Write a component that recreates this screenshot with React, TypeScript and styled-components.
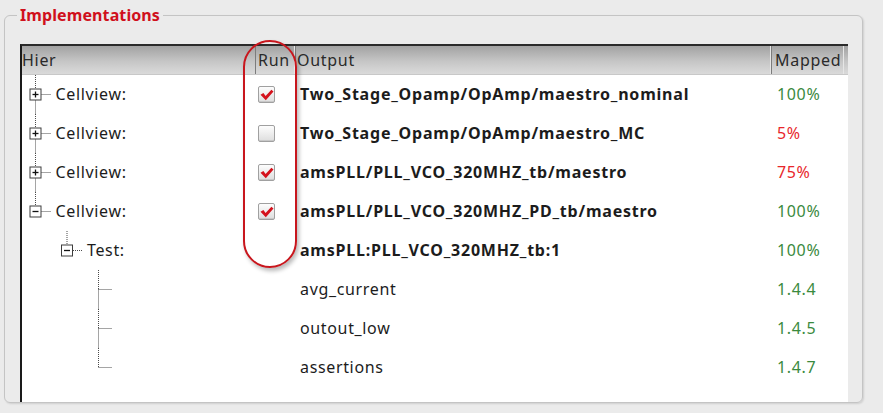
import React from "react";
import styled, { createGlobalStyle } from "styled-components";

const Global = createGlobalStyle`
  html, body { margin: 0; padding: 0; background: #ebebeb; }
  body { font-family: "Noto Sans", "Open Sans", sans-serif; }
`;

const Page = styled.div`
  position: relative;
  width: 883px;
  height: 413px;
  padding: 15px 0 0 4px;
  box-sizing: border-box;
  background: #ebebeb;
`;

const GroupBox = styled.div`
  position: relative;
  width: 859px;
  height: 388px;
  box-sizing: border-box;
  border: 1px solid #c4c4c4;
  border-radius: 6px;
  padding: 28px 15px 0 15px;
  box-shadow: 1px 1px 2px rgba(0, 0, 0, 0.12);
`;

const Legend = styled.div`
  position: absolute;
  left: 12px;
  top: -11px;
  padding: 0 3px;
  background: #ebebeb;
  color: #d0101c;
  font-weight: 700;
  font-size: 16px;
  line-height: 20px;
  letter-spacing: 0.1px;
`;

const Table = styled.div`
  width: 828px;
  height: 358px;
  box-sizing: border-box;
  background: #fff;
  border-left: 2px solid #1a1a1a;
  border-top: 2px solid #2a2a2a;
  display: flex;
  flex-direction: column;
`;

const Grid = styled.div`
  display: grid;
  grid-template-columns: 233px 40px 476px 73px;
`;

const Header = styled(Grid)`
  height: 28px;
  background: linear-gradient(#a2a2a2, #c6c6c6 55%, #dadada);
  border-bottom: 1px solid #c8c8c8;
  color: #2a2a2a;
  font-size: 16px;
  letter-spacing: 0.7px;
`;

const HeadCell = styled.div<{ $pad: number; $sep?: boolean }>`
  display: flex;
  align-items: center;
  padding-left: ${(p) => p.$pad}px;
  border-left: ${(p) => (p.$sep ? "1px solid #7c7c7c" : "none")};
  border-right: ${(p) => (p.$sep ? "1px solid #e6e6e6" : "none")};
  overflow: hidden;
  white-space: nowrap;
`;

const Row = styled(Grid)`
  height: 39px;
  align-items: center;
  font-size: 16px;
  letter-spacing: 0.65px;
  color: #1c1c1c;
`;

const HierCell = styled.div`
  display: flex;
  align-items: center;
  height: 39px;
`;

const TreeSvg = styled.svg`
  flex: none;
  display: block;
`;

const HierLabel = styled.span`
  white-space: nowrap;
  padding-bottom: 2px;
`;

const RunCell = styled.div`
  display: flex;
  align-items: center;
  padding-left: 3px;
`;

const Box = styled.span`
  display: inline-flex;
  align-items: center;
  justify-content: center;
  width: 17px;
  height: 17px;
  box-sizing: border-box;
  border: 1px solid #a0a0a0;
  border-radius: 2px;
  background: linear-gradient(#fdfdfd, #dedede);
  box-shadow: inset 0 -1px 0 #c8c8c8;
`;

const OutputCell = styled.div<{ $bold: boolean }>`
  padding-left: 5px;
  padding-bottom: 2px;
  font-weight: ${(p) => (p.$bold ? 700 : 400)};
  letter-spacing: ${(p) => (p.$bold ? "0.78px" : "0.65px")};
  white-space: nowrap;
`;

const MappedCell = styled.div<{ $bad: boolean }>`
  padding-left: 6px;
  padding-bottom: 2px;
  color: ${(p) => (p.$bad ? "#e8262b" : "#3a8a3e")};
  white-space: nowrap;
`;

const Highlight = styled.div`
  position: absolute;
  left: 243px;
  top: 40px;
  width: 54px;
  height: 228px;
  box-sizing: border-box;
  border: 2.5px solid #c8161d;
  border-radius: 27px;
  box-shadow: 2px 3px 4px rgba(0, 0, 0, 0.28);
  pointer-events: none;
`;

type Node = {
  level: number;
  box?: "plus" | "minus";
  above: boolean;
  below: boolean;
  label: string;
  run?: boolean;
  output: string;
  bold: boolean;
  mapped: string;
  bad: boolean;
};

const rows: Node[] = [
  { level: 0, box: "plus", above: true, below: true, label: "Cellview:", run: true, output: "Two_Stage_Opamp/OpAmp/maestro_nominal", bold: true, mapped: "100%", bad: false },
  { level: 0, box: "plus", above: true, below: true, label: "Cellview:", run: false, output: "Two_Stage_Opamp/OpAmp/maestro_MC", bold: true, mapped: "5%", bad: true },
  { level: 0, box: "plus", above: true, below: true, label: "Cellview:", run: true, output: "amsPLL/PLL_VCO_320MHZ_tb/maestro", bold: true, mapped: "75%", bad: true },
  { level: 0, box: "minus", above: true, below: false, label: "Cellview:", run: true, output: "amsPLL/PLL_VCO_320MHZ_PD_tb/maestro", bold: true, mapped: "100%", bad: false },
  { level: 1, box: "minus", above: true, below: false, label: "Test:", output: "amsPLL:PLL_VCO_320MHZ_tb:1", bold: true, mapped: "100%", bad: false },
  { level: 2, above: true, below: true, label: "", output: "avg_current", bold: false, mapped: "1.4.4", bad: false },
  { level: 2, above: true, below: true, label: "", output: "outout_low", bold: false, mapped: "1.4.5", bad: false },
  { level: 2, above: true, below: false, label: "", output: "assertions", bold: false, mapped: "1.4.7", bad: false },
];

const DOT = "#4a4a4a";

function TreeGlyph({ node }: { node: Node }) {
  const cx = 13.5 + node.level * 31.5;
  const cy = 19.5;
  const width = node.box ? cx + 20 : 120;
  return (
    <TreeSvg width={width} height={39} viewBox={`0 0 ${width} 39`}>
      {node.above && (
        <line x1={cx} y1={0} x2={cx} y2={node.box ? cy - 6 : cy} stroke={DOT} strokeDasharray="1 1" />
      )}
      {node.below && (
        <line x1={cx} y1={node.box ? cy + 6 : cy} x2={cx} y2={39} stroke={DOT} strokeDasharray="1 1" />
      )}
      <line x1={node.box ? cx + 6 : cx} y1={cy} x2={node.box ? cx + 15 : cx + 14} y2={cy} stroke={DOT} strokeDasharray="1 1" />
      {node.box && (
        <g>
          <rect x={cx - 5.5} y={cy - 5.5} width={11} height={11} fill="#fff" stroke="#3c3c3c" />
          <line x1={cx - 3} y1={cy} x2={cx + 3} y2={cy} stroke="#111" strokeWidth={1.3} />
          {node.box === "plus" && (
            <line x1={cx} y1={cy - 3} x2={cx} y2={cy + 3} stroke="#111" strokeWidth={1.3} />
          )}
        </g>
      )}
    </TreeSvg>
  );
}

function Check() {
  return (
    <svg width="14" height="12" viewBox="0 0 14 12">
      <path d="M0.5 5.8 L3.4 4 L5.6 7 L11.4 0.8 L13.5 2.6 L5.8 11.2 Z" fill="#d4121c" />
    </svg>
  );
}

export default function App() {
  return (
    <>
      <Global />
      <Page>
        <GroupBox>
          <Legend>Implementations</Legend>
          <Table>
            <Header>
              <HeadCell $pad={0}>Hier</HeadCell>
              <HeadCell $pad={2} $sep>Run</HeadCell>
              <HeadCell $pad={1} $sep>Output</HeadCell>
              <HeadCell $pad={3} $sep>Mapped</HeadCell>
            </Header>
            {rows.map((r, i) => (
              <Row key={i}>
                <HierCell>
                  <TreeGlyph node={r} />
                  {r.label && <HierLabel>{r.label}</HierLabel>}
                </HierCell>
                <RunCell>
                  {r.run !== undefined && <Box>{r.run && <Check />}</Box>}
                </RunCell>
                <OutputCell $bold={r.bold}>{r.output}</OutputCell>
                <MappedCell $bad={r.bad}>{r.mapped}</MappedCell>
              </Row>
            ))}
          </Table>
        </GroupBox>
        <Highlight />
      </Page>
    </>
  );
}
